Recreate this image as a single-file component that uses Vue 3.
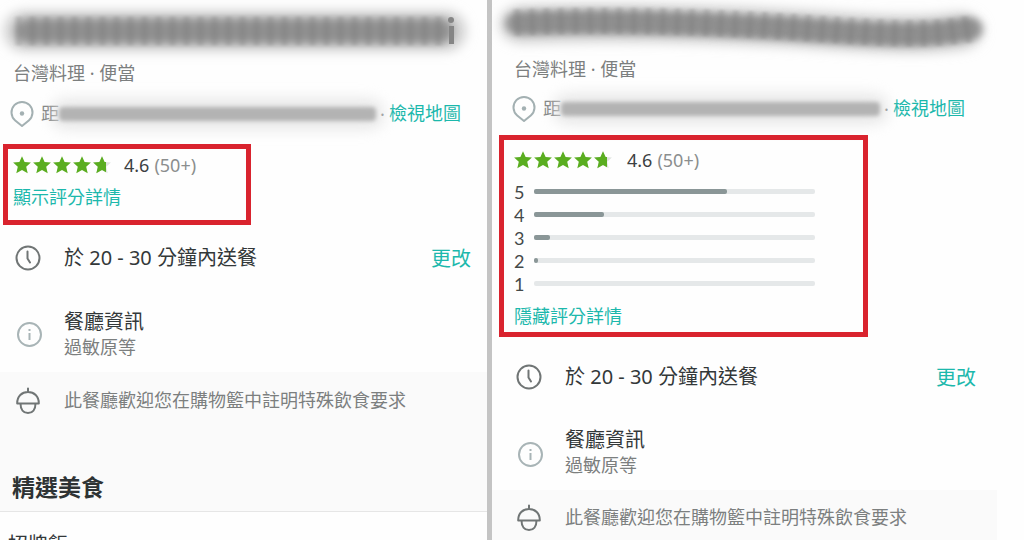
<script setup>
const panels = [
  {
    id: 'collapsed',
    halo: 'M24 31 H446',
    smear: 'M28 31 H440',
    detail: 'M16 31 H446',
    tail: true,
    toggle: '顯示評分詳情',
    bars: [],
    featured: true,
  },
  {
    id: 'expanded',
    halo: 'M28 26 C150 22 250 27 330 33 S430 36 452 33',
    smear: 'M26 25 C150 21 250 28 330 34 S430 36 460 31',
    detail: 'M22 24 C150 19 250 26 330 32 S430 36 462 31',
    tail: false,
    toggle: '隱藏評分詳情',
    bars: [
      { stars: 5, share: 68.5 },
      { stars: 4, share: 24.8 },
      { stars: 3, share: 5.5 },
      { stars: 2, share: 1.4 },
      { stars: 1, share: 0 },
    ],
    featured: false,
  },
]
const starPath = 'M9 0.2 L11.6 6 L17.9 6.5 L13.2 10.8 L14.7 17.2 L9 13.9 L3.3 17.2 L4.8 10.8 L0.1 6.5 L6.4 6 Z'
</script>

<template>
  <main class="page">
    <section v-for="p in panels" :key="p.id" class="panel" :class="p.id">
      <svg class="title" viewBox="0 0 487 60" preserveAspectRatio="none" aria-hidden="true">
        <defs>
          <filter :id="p.id + '-wide'" x="-50" y="-50" width="600" height="170" filterUnits="userSpaceOnUse">
            <feGaussianBlur stdDeviation="6" />
          </filter>
          <filter :id="p.id + '-core'" x="-20" y="-20" width="540" height="100" filterUnits="userSpaceOnUse">
            <feGaussianBlur stdDeviation="4" />
          </filter>
          <filter :id="p.id + '-fine'" x="-20" y="-20" width="540" height="100" filterUnits="userSpaceOnUse">
            <feGaussianBlur stdDeviation="2 1" />
          </filter>
        </defs>
        <path :d="p.halo" class="halo" :filter="`url(#${p.id}-wide)`" />
        <path :d="p.smear" class="core" :filter="`url(#${p.id}-core)`" />
        <path :d="p.detail" class="ribs" :filter="`url(#${p.id}-fine)`" />
        <g v-if="p.tail" class="tail">
          <circle cx="451" cy="20" r="3" />
          <rect x="449" y="26" width="5" height="18" />
        </g>
      </svg>

      <p class="cuisine">台灣料理 · 便當</p>

      <div class="location">
        <svg class="pin" viewBox="0 0 24 28" aria-hidden="true">
          <path d="M12 26 L5.2 20.4 A10.5 10.5 0 1 1 18.8 20.4 Z" />
          <circle cx="12" cy="13.5" r="2.2" />
        </svg>
        <span class="near">距</span>
        <span class="smudge"></span>
        <span class="dot">·</span>
        <a href="#map">檢視地圖</a>
      </div>

      <div class="rating">
        <div class="score">
          <span class="stars">
            <svg v-for="n in 5" :key="n" viewBox="0 0 18 18" aria-hidden="true">
              <defs>
                <clipPath :id="`${p.id}-clip-${n}`"><rect width="13" height="18" /></clipPath>
              </defs>
              <path v-if="n === 5" :d="starPath" class="off" />
              <path :d="starPath" class="on" :clip-path="n === 5 ? `url(#${p.id}-clip-5)` : undefined" />
            </svg>
          </span>
          <span class="value">4.6</span>
          <span class="count">(50+)</span>
        </div>
        <ul v-if="p.bars.length" class="bars">
          <li v-for="b in p.bars" :key="b.stars">
            <span>{{ b.stars }}</span>
            <div class="track"><div class="fill" :style="{ width: b.share + '%' }"></div></div>
          </li>
        </ul>
        <button type="button" class="toggle">{{ p.toggle }}</button>
      </div>

      <div class="row delivery">
        <svg class="icon" viewBox="0 0 28 28" aria-hidden="true">
          <circle cx="14" cy="14" r="11.5" />
          <path d="M13.5 7.5 V14.5 L16 18.5" />
        </svg>
        <span class="main">於 20 - 30 分鐘內送餐</span>
        <button type="button" class="change">更改</button>
      </div>

      <div class="row info">
        <svg class="icon pale" viewBox="0 0 28 28" aria-hidden="true">
          <circle cx="15.5" cy="14.5" r="11.5" />
          <path d="M15.5 13 V20 M15.5 9 V11" />
        </svg>
        <div>
          <p class="main">餐廳資訊</p>
          <p class="sub">過敏原等</p>
        </div>
      </div>

      <div class="row note">
        <svg class="icon" viewBox="0 0 28 28" aria-hidden="true">
          <path d="M14 2.5 V6 M3.2 17.5 C3 10 8 6 14 6 S25 10 24.8 17.5 Z M6.5 17.5 C6.5 23.5 9.5 27 14 27 S21.5 23.5 21.5 17.5" />
        </svg>
        <p class="sub">此餐廳歡迎您在購物籃中註明特殊飲食要求</p>
      </div>

      <template v-if="p.featured">
        <h2>精選美食</h2>
        <p class="dish">招牌飯</p>
      </template>
    </section>
  </main>
</template>

<style>
body {
  margin: 0;
  background: #fefefe;
}
</style>

<style scoped>
.page {
  display: flex;
  height: 100vh;
  overflow: hidden;
  font-family: "Noto Sans", "Noto Sans CJK TC", sans-serif;
  font-size: 18px;
  color: #7c7f7f;
}
p, h2, ul {
  margin: 0;
  padding: 0;
}
.panel {
  min-width: 0;
}
.collapsed {
  flex: 487 1 0;
}
.expanded {
  flex: 505 1 0;
  margin-right: 27px;
  border-left: 5px solid #c4c4c4;
}
.title {
  display: block;
  width: 100%;
  height: 60px;
  overflow: visible;
}
.expanded .title {
  height: 56px;
}
.title path {
  fill: none;
}
.halo {
  stroke: #cfcfcf;
  stroke-width: 40;
  stroke-linecap: round;
}
.core {
  stroke: #8f8f8f;
  stroke-width: 25;
  stroke-linecap: round;
}
.ribs {
  stroke: #777;
  stroke-width: 29;
  stroke-dasharray: 5 9;
  opacity: 0.3;
}
.tail {
  fill: #858585;
}
.cuisine {
  padding-left: 13px;
  line-height: 26px;
}
.expanded .cuisine {
  padding-left: 22px;
}
.location {
  display: flex;
  align-items: center;
  height: 28px;
  margin-top: 14px;
  padding: 0 26px 0 10px;
  line-height: 24px;
}
.location a, .near {
  padding-bottom: 2px;
}
.expanded .location {
  margin-top: 13px;
  padding: 0 32px 0 20px;
}
.pin {
  width: 24px;
  height: 28px;
  margin-right: 7px;
  fill: none;
  stroke: #a3b0b2;
  stroke-width: 2;
  stroke-linejoin: round;
}
.pin circle {
  fill: #a3b0b2;
  stroke: none;
}
.smudge {
  flex: 1;
  height: 14px;
  border-radius: 4px;
  background: #b3b3b3;
  box-shadow: 0 0 16px 6px #e2e2e2;
  filter: blur(2px);
}
.dot {
  width: 13px;
  text-align: center;
}
a, button {
  color: #1cb8ac;
  text-decoration: none;
}
button {
  padding: 0;
  border: 0;
  background: none;
  font-family: inherit;
  cursor: pointer;
}
.rating {
  box-sizing: border-box;
  position: relative;
  width: 248px;
  margin: 16px 0 0 3px;
  padding: 0 0 7px 5px;
  border: 5px solid #d9232e;
}
.expanded .rating {
  width: 369px;
  margin: 12px 0 0 7px;
  padding: 4px 48px 0 10px;
}
.score {
  display: flex;
  align-items: center;
  height: 32px;
}
.stars {
  display: flex;
  gap: 2px;
  margin-right: 13px;
}
.expanded .stars {
  margin-right: 15px;
}
.stars svg {
  width: 18px;
  height: 18px;
}
.on {
  fill: #5aad20;
}
.off {
  fill: #dfe3e0;
}
.value {
  margin-right: 5px;
  color: #3c4142;
}
.count {
  color: #8b8e8e;
}
.bars {
  margin: 4px 0 5px;
  list-style: none;
  font-family: Lato, sans-serif;
  color: #444949;
}
.bars li {
  display: flex;
  align-items: center;
  gap: 10px;
  height: 23px;
}
.track {
  flex: 1;
  height: 5px;
  border-radius: 2px;
  background: #e5e8e9;
}
.fill {
  height: 5px;
  border-radius: 2px;
  background: #8a9697;
}
.toggle {
  display: block;
  font-size: 18px;
  line-height: 32px;
}
.row {
  display: flex;
  align-items: center;
  padding: 0 16px 0 14px;
}
.expanded .row {
  padding: 0 21px 0 23px;
}
.icon {
  flex: none;
  width: 28px;
  height: 28px;
  margin-right: 22px;
  fill: none;
  stroke: #707575;
  stroke-width: 2;
  stroke-linecap: round;
  stroke-linejoin: round;
}
.pale {
  stroke: #a8b4b6;
  stroke-linecap: butt;
}
.main {
  font-size: 20px;
  line-height: 26px;
  color: #333839;
}
.sub {
  line-height: 24px;
}
.delivery {
  height: 66px;
}
.expanded .delivery {
  height: 80px;
}
.change {
  margin-left: auto;
  padding-bottom: 2px;
  font-size: 20px;
}
.info {
  height: 81px;
}
.info .icon {
  margin-top: 4px;
}
.info > div {
  padding-top: 4px;
}
.expanded .info {
  height: 73px;
}
.expanded .info .icon {
  margin-top: 0;
}
.expanded .info > div {
  padding: 0 0 4px;
}
.note {
  height: 56px;
  background: #fafafa;
}
.expanded .note {
  height: 54px;
}
h2 {
  padding: 43px 12px 8px;
  border-bottom: 1px solid #e6e6e6;
  background: #fafafa;
  font-size: 23px;
  line-height: 32px;
  font-weight: 700;
  color: #2e3334;
}
.dish {
  padding: 20px 8px;
  font-size: 20px;
  line-height: 26px;
  color: #333839;
}
</style>
